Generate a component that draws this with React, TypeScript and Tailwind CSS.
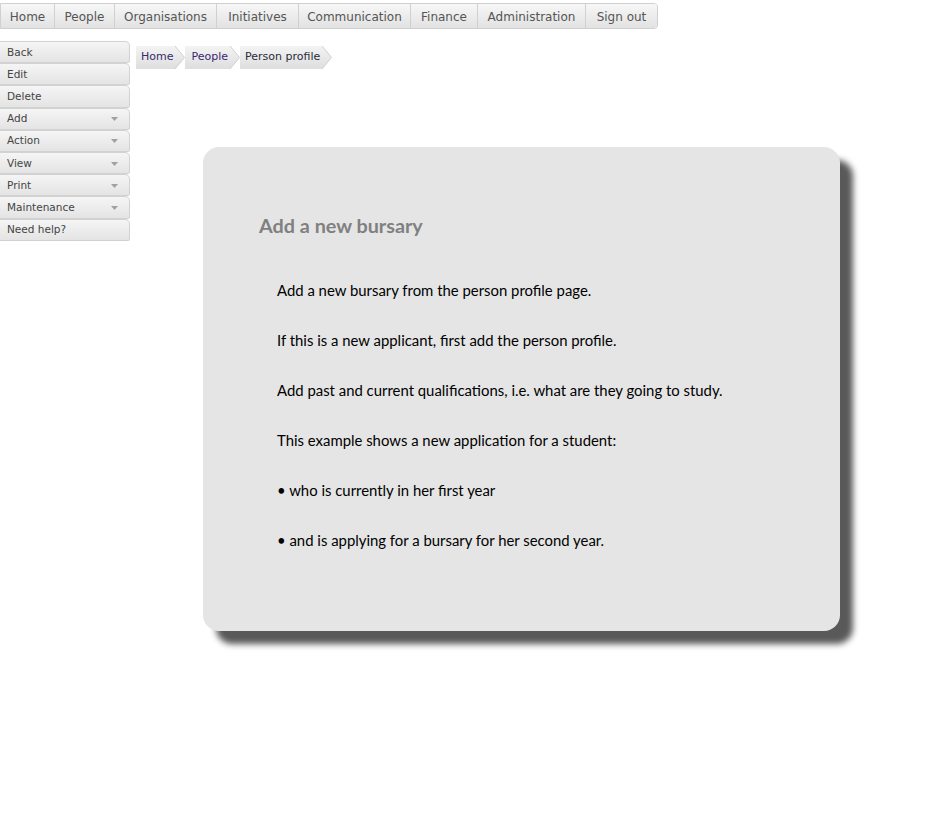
import React from "react";

const navItems = [
  { label: "Home", w: "w-[53px]" },
  { label: "People", w: "w-[60px]" },
  { label: "Organisations", w: "w-[102px]" },
  { label: "Initiatives", w: "w-[82px]" },
  { label: "Communication", w: "w-[112px]" },
  { label: "Finance", w: "w-[67px]" },
  { label: "Administration", w: "w-[108px]" },
  { label: "Sign out", w: "w-[72px]" },
];

const sideItems = [
  { label: "Back", menu: false },
  { label: "Edit", menu: false },
  { label: "Delete", menu: false },
  { label: "Add", menu: true },
  { label: "Action", menu: true },
  { label: "View", menu: true },
  { label: "Print", menu: true },
  { label: "Maintenance", menu: true },
  { label: "Need help?", menu: false },
];

const crumbs = [
  { label: "Home", color: "text-[#3a2a6e]", pad: "pl-[5px]" },
  { label: "People", color: "text-[#3a2a6e]", pad: "pl-[6px]" },
  { label: "Person profile", color: "text-[#2b2b3b]", pad: "pl-[5px]" },
];

const lines = [
  "Add a new bursary from the person profile page.",
  "If this is a new applicant, first add the person profile.",
  "Add past and current qualifications, i.e. what are they going to study.",
  "This example shows a new application for a student:",
  "• who is currently in her first year",
  "• and is applying for a bursary for her second year.",
];

const Chevron: React.FC = () => (
  <svg width="10" height="23" viewBox="0 0 10 23" className="shrink-0">
    <defs>
      <linearGradient id="cg" x1="0" y1="0" x2="0" y2="1">
        <stop offset="0" stopColor="#f3f3f3" />
        <stop offset="1" stopColor="#dedede" />
      </linearGradient>
    </defs>
    <path d="M0 0 L9.5 11.5 L0 23 Z" fill="url(#cg)" />
    <path d="M0 0 L9.5 11.5 L0 23" fill="none" stroke="#cfcfcf" strokeWidth="1" />
  </svg>
);

export default function App() {
  return (
    <div className="relative w-[943px] h-[820px] bg-white font-['DejaVu_Sans',Verdana,sans-serif]">
      {/* top nav */}
      <div className="pt-[3px] flex">
        <div className="flex h-[26px] border border-[#d0d0d0] rounded-r-[4px] overflow-hidden">
          {navItems.map((n, i) => (
            <div
              key={n.label}
              className={`${n.w} flex items-center justify-center pt-[1px] text-[12px] text-[#555] bg-gradient-to-b from-[#f7f7f7] to-[#e2e2e2] ${
                i > 0 ? "border-l border-[#d0d0d0]" : ""
              }`}
            >
              {n.label}
            </div>
          ))}
        </div>
      </div>

      <div className="flex mt-[12px]">
        {/* side menu */}
        <div className="w-[130px] flex flex-col">
          {sideItems.map((s) => (
            <div
              key={s.label}
              className="h-[22.2px] flex items-center justify-between pt-[1px] pl-[7px] pr-[11px] text-[10.5px] text-[#444] bg-gradient-to-b from-[#f5f5f5] to-[#e4e4e4] border border-l-0 border-[#d2d2d2] rounded-tr-[5px] rounded-br-[2px]"
            >
              <span>{s.label}</span>
              {s.menu && (
                <svg width="7" height="4" viewBox="0 0 7 4">
                  <path d="M0 0 H7 L3.5 4 Z" fill="#a0a0a0" />
                </svg>
              )}
            </div>
          ))}
        </div>

        {/* breadcrumb */}
        <div className="ml-[6px] mt-[5px] flex h-[23px] self-start">
          {crumbs.map((c) => (
            <div key={c.label} className="flex">
              <div
                className={`${c.pad} pr-[2px] flex items-center text-[11px] ${c.color} bg-gradient-to-b from-[#f3f3f3] to-[#dedede]`}
              >
                {c.label}
              </div>
              <Chevron />
            </div>
          ))}
        </div>
      </div>

      {/* help card */}
      <div className="absolute left-[203px] top-[147px] w-[637px] h-[484px] rounded-[16px] bg-[#e5e5e5] shadow-[13px_13px_6px_#595959] font-['Lato',Carlito,Calibri,sans-serif]">
        <div className="pt-[65px] pl-[56px] text-[19.8px] font-bold text-[#808080] leading-[26px]">
          Add a new bursary
        </div>
        <div className="pl-[74px] pt-[42px] flex flex-col gap-[30px]">
          {lines.map((l) => (
            <div key={l} className="text-[14.9px] text-black leading-[20px]">
              {l}
            </div>
          ))}
        </div>
      </div>
    </div>
  );
}
